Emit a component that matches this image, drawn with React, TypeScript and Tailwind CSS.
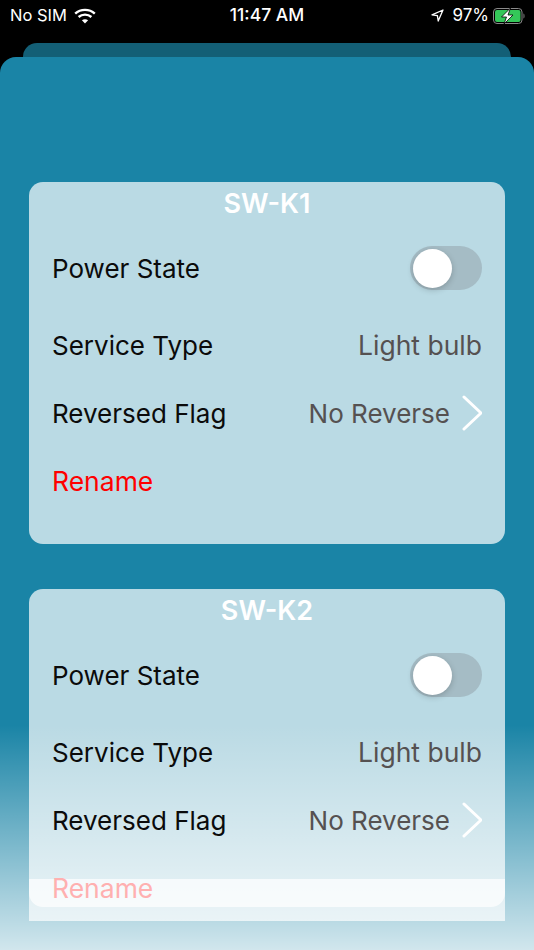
const font = { fontFamily: "Inter, sans-serif" };

function WifiIcon() {
  return (
    <svg width="22" height="16" viewBox="0 0 22 16" fill="none" stroke="white" strokeWidth="2.4">
      <path d="M1.2 5.6C6.6 0.6 15.4 0.6 20.8 5.6" />
      <path d="M4.6 9C8.2 5.8 13.8 5.8 17.4 9" />
      <path d="M11 15.6L7.9 12.2C9.7 10.8 12.3 10.8 14.1 12.2Z" fill="white" stroke="none" />
    </svg>
  );
}

function LocationIcon() {
  return (
    <svg width="13" height="13" viewBox="0 0 13 13" fill="none" stroke="white" strokeWidth="1.3" strokeLinejoin="round">
      <path d="M12 1L1 5.8L6.4 6.6L7.2 12Z" />
    </svg>
  );
}

function BatteryIcon() {
  return (
    <svg width="33" height="16" viewBox="0 0 33 16">
      <rect x="0.5" y="0.5" width="28.5" height="15" rx="3.5" fill="none" stroke="#8a8a8a" />
      <rect x="2" y="2" width="25.5" height="12" rx="2" fill="#34c759" />
      <path d="M30.5 5.5C31.8 5.8 31.8 10.2 30.5 10.5Z" fill="#8a8a8a" />
      <path d="M17.5 0L8.5 9H13.5L11 16L20 7H15Z" fill="white" stroke="black" strokeWidth="0.8" />
    </svg>
  );
}

function Chevron() {
  return (
    <svg width="20" height="36" viewBox="0 0 20 36" fill="none" stroke="white" strokeWidth="3" strokeLinecap="round" strokeLinejoin="round">
      <path d="M2 2L19 18L2 34" />
    </svg>
  );
}

function StatusBar() {
  return (
    <div className="flex h-[31px] items-center justify-between pl-[10px] pr-[8px] text-white">
      <div className="flex w-[130px] items-center gap-[7px] text-[16.5px]">
        <span>No SIM</span>
        <WifiIcon />
      </div>
      <span className="-ml-[2px] text-[17.5px] font-medium">11:47 AM</span>
      <div className="flex w-[130px] items-center justify-end text-[17px]">
        <LocationIcon />
        <span className="ml-[8px] mr-[4px]">97%</span>
        <BatteryIcon />
      </div>
    </div>
  );
}

function Toggle() {
  return (
    <div className="flex h-[44px] w-[72px] items-center rounded-full bg-[#a5bcc5] pl-[3px]">
      <div className="h-[39px] w-[39px] rounded-full bg-white shadow-[0_2px_6px_rgba(0,0,0,0.2)]" />
    </div>
  );
}

function SwitchCard({ name, last }: { name: string; last?: boolean }) {
  return (
    <div className={last ? "relative h-[332px] rounded-t-[14px] bg-white/70" : "relative h-[362px] rounded-[14px] bg-white/70"}>
      <div className="relative z-30">
        <div className="h-[44px] pt-[3px] text-center text-[27px] leading-[38px] font-semibold text-white">{name}</div>
        <div className="px-[23px] text-[26px]">
          <div className="flex h-[84px] items-center justify-between">
            <span className="text-[#0b0b0b]">Power State</span>
            <Toggle />
          </div>
          <div className="mt-[1px] flex h-[68px] items-center justify-between">
            <span className="text-[#0b0b0b]">Service Type</span>
            <span className="mt-[2px] text-[26.5px] text-[#555151]">Light bulb</span>
          </div>
          <div className="flex h-[68px] items-center justify-between">
            <span className="text-[#0b0b0b]">Reversed Flag</span>
            <div className="flex items-center gap-[12px]">
              <span className="text-[#555151]">No Reverse</span>
              <Chevron />
            </div>
          </div>
          <div className={last ? "flex h-[68px] items-center pt-[2px] text-[26.5px] text-[#ffb0b0]" : "flex h-[68px] items-center pt-[2px] text-[26.5px] text-[#ff0000]"}>Rename</div>
        </div>
      </div>
      {last && <div className="absolute inset-x-0 top-[290px] z-[25] h-[28px] rounded-b-[14px] bg-white/70" />}
    </div>
  );
}

export default function App() {
  return (
    <div className="relative h-[950px] w-[534px] overflow-hidden bg-black" style={font}>
      <StatusBar />
      <div className="mx-[23px] mt-[12px] h-[40px] rounded-t-[14px] bg-[#135f76]" />
      <div className="relative -mt-[26px] h-[893px] rounded-t-[16px] bg-[#1a84a6] px-[29px] pt-[125px]">
        <div className="flex flex-col gap-[45px]">
          <SwitchCard name="SW-K1" />
          <SwitchCard name="SW-K2" last />
        </div>
      </div>
      <div className="absolute inset-x-0 bottom-0 z-20 h-[225px] bg-gradient-to-b from-white/0 to-white/80" />
    </div>
  );
}
